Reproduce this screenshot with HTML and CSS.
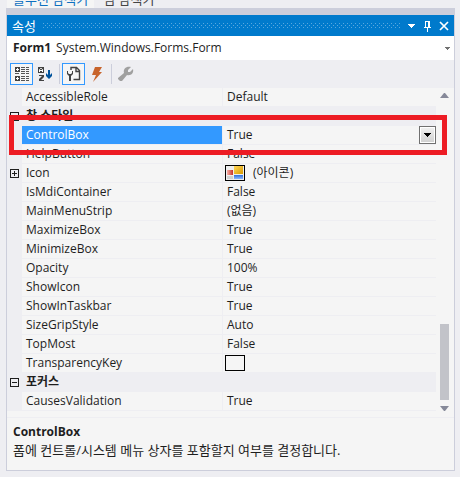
FILE: index.html
```html
<!DOCTYPE html>
<html lang="ko">
<head>
	<meta charset="UTF-8">
	<title>속성</title>
	<link rel="stylesheet" href="styles.css">
</head>
<body>
	<nav class="tabs">
		<a class="tab active" href="#solution">솔루션 탐색기</a>
		<a class="tab" href="#team">팀 탐색기</a>
	</nav>
	<main class="dock">
	<section class="panel">
		<header class="titlebar">
			<h1>속성</h1>
			<svg class="grip" height="5" aria-hidden="true">
				<defs>
					<pattern id="dots" width="4" height="4" patternUnits="userSpaceOnUse">
						<path d="M0 0h1v1h-1zM2 2h1v1h-1z" fill="#59a8de"/>
					</pattern>
				</defs>
				<rect width="100%" height="5" fill="url(#dots)"/>
			</svg>
			<button aria-label="창 위치"><svg width="9" height="12" shape-rendering="crispEdges"><path d="M1 4h7v1h-1v1h-1v1h-1v1h-1v-1h-1v-1h-1v-1h-1z" fill="#fff"/></svg></button>
			<button aria-label="자동 숨기기"><svg width="9" height="12" shape-rendering="crispEdges"><path d="M2 1h5v6h1v1h-3v4h-1v-4h-3v-1h1zM3 2v5h2v-5z" fill="#fff" fill-rule="evenodd"/></svg></button>
			<button aria-label="닫기"><svg width="10" height="12"><path d="M1 2l8 8M9 2l-8 8" stroke="#fff" stroke-width="1.7"/></svg></button>
		</header>
		<button class="object">
			<b>Form1</b><span>System.Windows.Forms.Form</span>
			<svg width="5" height="3" shape-rendering="crispEdges"><path d="M0 0h5v1h-1v1h-1v1h-1v-1h-1v-1h-1z" fill="#717171"/></svg>
		</button>
		<div class="toolbar">
			<button class="on" aria-label="항목별"><svg width="16" height="16" shape-rendering="crispEdges">
				<path d="M1 1h5v5h-5zM1 10h5v5h-5z" fill="#424242"/>
				<path d="M3 2h1v1h1v1h-1v1h-1v-1h-1v-1h1zM3 11h1v1h1v1h-1v1h-1v-1h-1v-1h1z" fill="#fff"/>
				<path d="M7 1h4v1h-4zM7 3h4v1h-4zM7 5h4v1h-4zM1 7h4v1h-4zM7 7h4v1h-4zM7 10h4v1h-4zM7 12h4v1h-4zM7 14h4v1h-4zM12 1h3v1h-3zM12 3h3v1h-3zM12 5h3v1h-3zM12 7h3v1h-3zM12 10h3v1h-3zM12 12h3v1h-3zM12 14h3v1h-3z" fill="#555"/>
			</svg></button>
			<button aria-label="사전순"><svg width="16" height="16">
				<path d="M1 1h6v6h-6z" fill="#424242"/>
				<path d="M2.500 6v-2.500l1-1h1l1 1v2.500M3 4.500h2" fill="none" stroke="#fff"/>
				<path d="M2 9h5v2l-3 3h3v1h-5v-2l3-3h-3z" fill="#424242"/>
				<path d="M11 4h2v5l2-2v3l-3 3-3-3v-3l2 2z" fill="#00539c"/>
			</svg></button>
			<i></i>
			<button class="on" aria-label="속성"><svg width="16" height="16">
				<path d="M5 4v-2.500h5.500l3 3v9h-6M10 2v3.500h3" fill="none" stroke="#424242" stroke-width="1.400"/>
				<path d="M1 5v3l2 2v5h2v-5l2-2v-3h-1v2l-1 1h-2l-1-1v-2z" fill="#424242"/>
			</svg></button>
			<button aria-label="이벤트"><svg width="16" height="16"><path d="M6 1h7l-3 5h3l-9 10 3-7h-4z" fill="#c8642c"/></svg></button>
			<i></i>
			<button aria-label="속성 페이지" disabled><svg width="16" height="16"><path d="M13 1l-3 3 0 2 2 0 3-3c1 4-2 7-6 6l-5 6-2 0-2-2v-1l6-5c-1-4 2-7 7-6z" fill="#a0a0a0"/></svg></button>
		</div>
		<div class="browser">
			<table class="grid">
				<tbody>
					<tr><td></td><th scope="row">AccessibleRole</th><td>Default</td></tr>
					<tr class="category"><td><button class="expander" aria-label="접기"></button></td><th colspan="2">창 스타일</th></tr>
					<tr class="selected"><td></td><th scope="row">ControlBox</th><td><div class="value">True<button class="drop" aria-label="값 선택"><svg width="7" height="4" shape-rendering="crispEdges"><path d="M0 0h7v1h-1v1h-1v1h-1v1h-1v-1h-1v-1h-1v-1h-1z"/></svg></button></div></td></tr>
					<tr><td></td><th scope="row">HelpButton</th><td>False</td></tr>
					<tr><td><button class="expander plus" aria-label="펼치기"></button></td><th scope="row">Icon</th><td><div class="value"><svg class="swatch" width="20" height="16" shape-rendering="crispEdges">
						<defs>
							<linearGradient id="gold" x2="1" y2="1"><stop stop-color="#ffd75a"/><stop offset="1" stop-color="#d99a00"/></linearGradient>
							<linearGradient id="red"><stop stop-color="#f6b0a8"/><stop offset="1" stop-color="#c83028"/></linearGradient>
							<linearGradient id="blue" x2="0" y2="1"><stop stop-color="#2f6ed8"/><stop offset="1" stop-color="#8cb8ff"/></linearGradient>
						</defs>
						<path d="M0 0h20v16h-20z"/><path d="M1 1h18v14h-18z" fill="#eee"/>
						<path d="M9 1h9v8h-9z" fill="url(#gold)"/><path d="M2 5h6v5h-6z" fill="url(#red)"/><path d="M9 10h9v4h-9z" fill="url(#blue)"/><path d="M2 11h6v3h-6z" fill="#d0d0d0"/>
					</svg>(아이콘)</div></td></tr>
					<tr><td></td><th scope="row">IsMdiContainer</th><td>False</td></tr>
					<tr><td></td><th scope="row">MainMenuStrip</th><td>(없음)</td></tr>
					<tr><td></td><th scope="row">MaximizeBox</th><td>True</td></tr>
					<tr><td></td><th scope="row">MinimizeBox</th><td>True</td></tr>
					<tr><td></td><th scope="row">Opacity</th><td>100%</td></tr>
					<tr><td></td><th scope="row">ShowIcon</th><td>True</td></tr>
					<tr><td></td><th scope="row">ShowInTaskbar</th><td>True</td></tr>
					<tr><td></td><th scope="row">SizeGripStyle</th><td>Auto</td></tr>
					<tr><td></td><th scope="row">TopMost</th><td>False</td></tr>
					<tr><td></td><th scope="row">TransparencyKey</th><td><div class="value"><span class="swatch color"></span></div></td></tr>
					<tr class="category"><td><button class="expander" aria-label="접기"></button></td><th colspan="2">포커스</th></tr>
					<tr><td></td><th scope="row">CausesValidation</th><td>True</td></tr>
				</tbody>
			</table>
			<div class="scrollbar">
				<button aria-label="위로"><svg width="9" height="5"><path d="M0 5l4-5h1l4 5z" fill="#868999"/></svg></button>
				<div class="thumb"></div>
				<button aria-label="아래로"><svg width="9" height="5"><path d="M0 0h9l-4 5h-1z" fill="#868999"/></svg></button>
			</div>
			<div class="highlight"></div>
		</div>
		<footer class="help">
			<h2>ControlBox</h2>
			<p>폼에 컨트롤/시스템 메뉴 상자를 포함할지 여부를 결정합니다.</p>
		</footer>
	</section>
	</main>
</body>
</html>
```

FILE: styles.css
```css
* {
	box-sizing: border-box;
}

body {
	margin: 0;
	background: #eeeef2;
	color: #1e1e1e;
	font: 12px/18px "Open Sans", "Noto Sans CJK KR", sans-serif;
}

button {
	display: flex;
	align-items: center;
	justify-content: center;
	padding: 0;
	border: 0;
	background: none;
	color: inherit;
	font: inherit;
}

h1, h2, p {
	margin: 0;
	font-size: 12px;
}

.tabs {
	display: flex;
	align-items: flex-end;
	gap: 3px;
	height: 8px;
	margin-left: 7px;
	overflow: hidden;
}

.tab {
	padding: 0 6px;
	color: #444;
	font-size: 13px;
	line-height: 18px;
	text-decoration: none;
}

.tab.active {
	background: #f5f5f5;
	color: #0e70c0;
}

.dock {
	margin: 0 5px 0 6px;
	padding-top: 7px;
	background: #cccedb;
}

.panel {
	border: 1px solid #cccedb;
	border-top: 0;
	background: #eeeef2;
}

.titlebar {
	display: flex;
	align-items: center;
	gap: 7px;
	height: 21px;
	padding: 0 5px;
	background: #007acc;
	color: #fff;
}

.titlebar h1 {
	font-size: 13px;
	font-weight: normal;
}

.grip {
	flex: 1;
	min-width: 0;
}

.object {
	width: 100%;
	height: 24px;
	padding: 0 4px 0 6px;
	gap: 5px;
	background: #fff;
}

.object svg {
	margin-left: auto;
}

.toolbar {
	display: flex;
	align-items: center;
	height: 28px;
	padding: 0 3px;
}

.toolbar button {
	width: 23px;
	height: 22px;
}

.toolbar .on {
	border: 1px solid #3399ff;
	background: #f5f5f5;
}

.toolbar i {
	width: 1px;
	height: 20px;
	margin: 0 2px 0 3px;
	background: #cccedb;
}

.browser {
	position: relative;
	display: flex;
	padding-bottom: 6px;
	background: #f5f5f5;
}

.grid {
	flex: 1;
	border-spacing: 0;
	table-layout: fixed;
}

.grid tr {
	height: 19px;
}

.grid th,
.grid td {
	height: 19px;
	padding: 0 4px;
	border-bottom: 1px solid #eeeef2;
	font-weight: normal;
	text-align: left;
	white-space: nowrap;
}

.grid td:first-child {
	width: 15px;
	padding: 0 3px;
	background: #eeeef2;
}

.grid th {
	width: 201px;
	border-right: 1px solid #eeeef2;
}

.grid .category th {
	background: #eeeef2;
	font-weight: bold;
}

.grid .selected th {
	background: #3399ff;
	color: #fff;
}

.expander {
	width: 9px;
	height: 9px;
	border: 1px solid #1e1e1e;
	background: linear-gradient(#1e1e1e, #1e1e1e) center / 5px 1px no-repeat;
}

.expander.plus {
	background: linear-gradient(#1e1e1e, #1e1e1e) center / 5px 1px no-repeat, linear-gradient(#1e1e1e, #1e1e1e) center / 1px 5px no-repeat;
}

.value {
	display: flex;
	align-items: center;
	gap: 8px;
	height: 18px;
	margin: 0 -4px 0 0;
}

.swatch {
	flex: none;
	margin-left: -2px;
}

.color {
	width: 20px;
	height: 16px;
	border: 1px solid #000;
}

.drop {
	width: 17px;
	height: 18px;
	margin-left: auto;
	border: 1px solid #707070;
	background: linear-gradient(#f2f2f2, #cfcfcf);
	box-shadow: inset 0 0 0 1px #fff;
}

.scrollbar {
	display: flex;
	flex-direction: column;
	align-items: center;
	width: 18px;
	padding: 5px 1px 0 0;
}

.thumb {
	width: 9px;
	height: 76px;
	margin: auto 0 6px;
	background: #c2c3c9;
}

/* red frame round the selected property */
.highlight {
	position: absolute;
	top: 27px;
	left: 2px;
	right: 7px;
	height: 40px;
	border: 5px solid #ed1c24;
}

.help {
	min-height: 53px;
	padding: 5px 6px;
	border-top: 1px solid #eeeef2;
	background: #f5f5f5;
}

.help p {
	font-size: 13px;
}
```
